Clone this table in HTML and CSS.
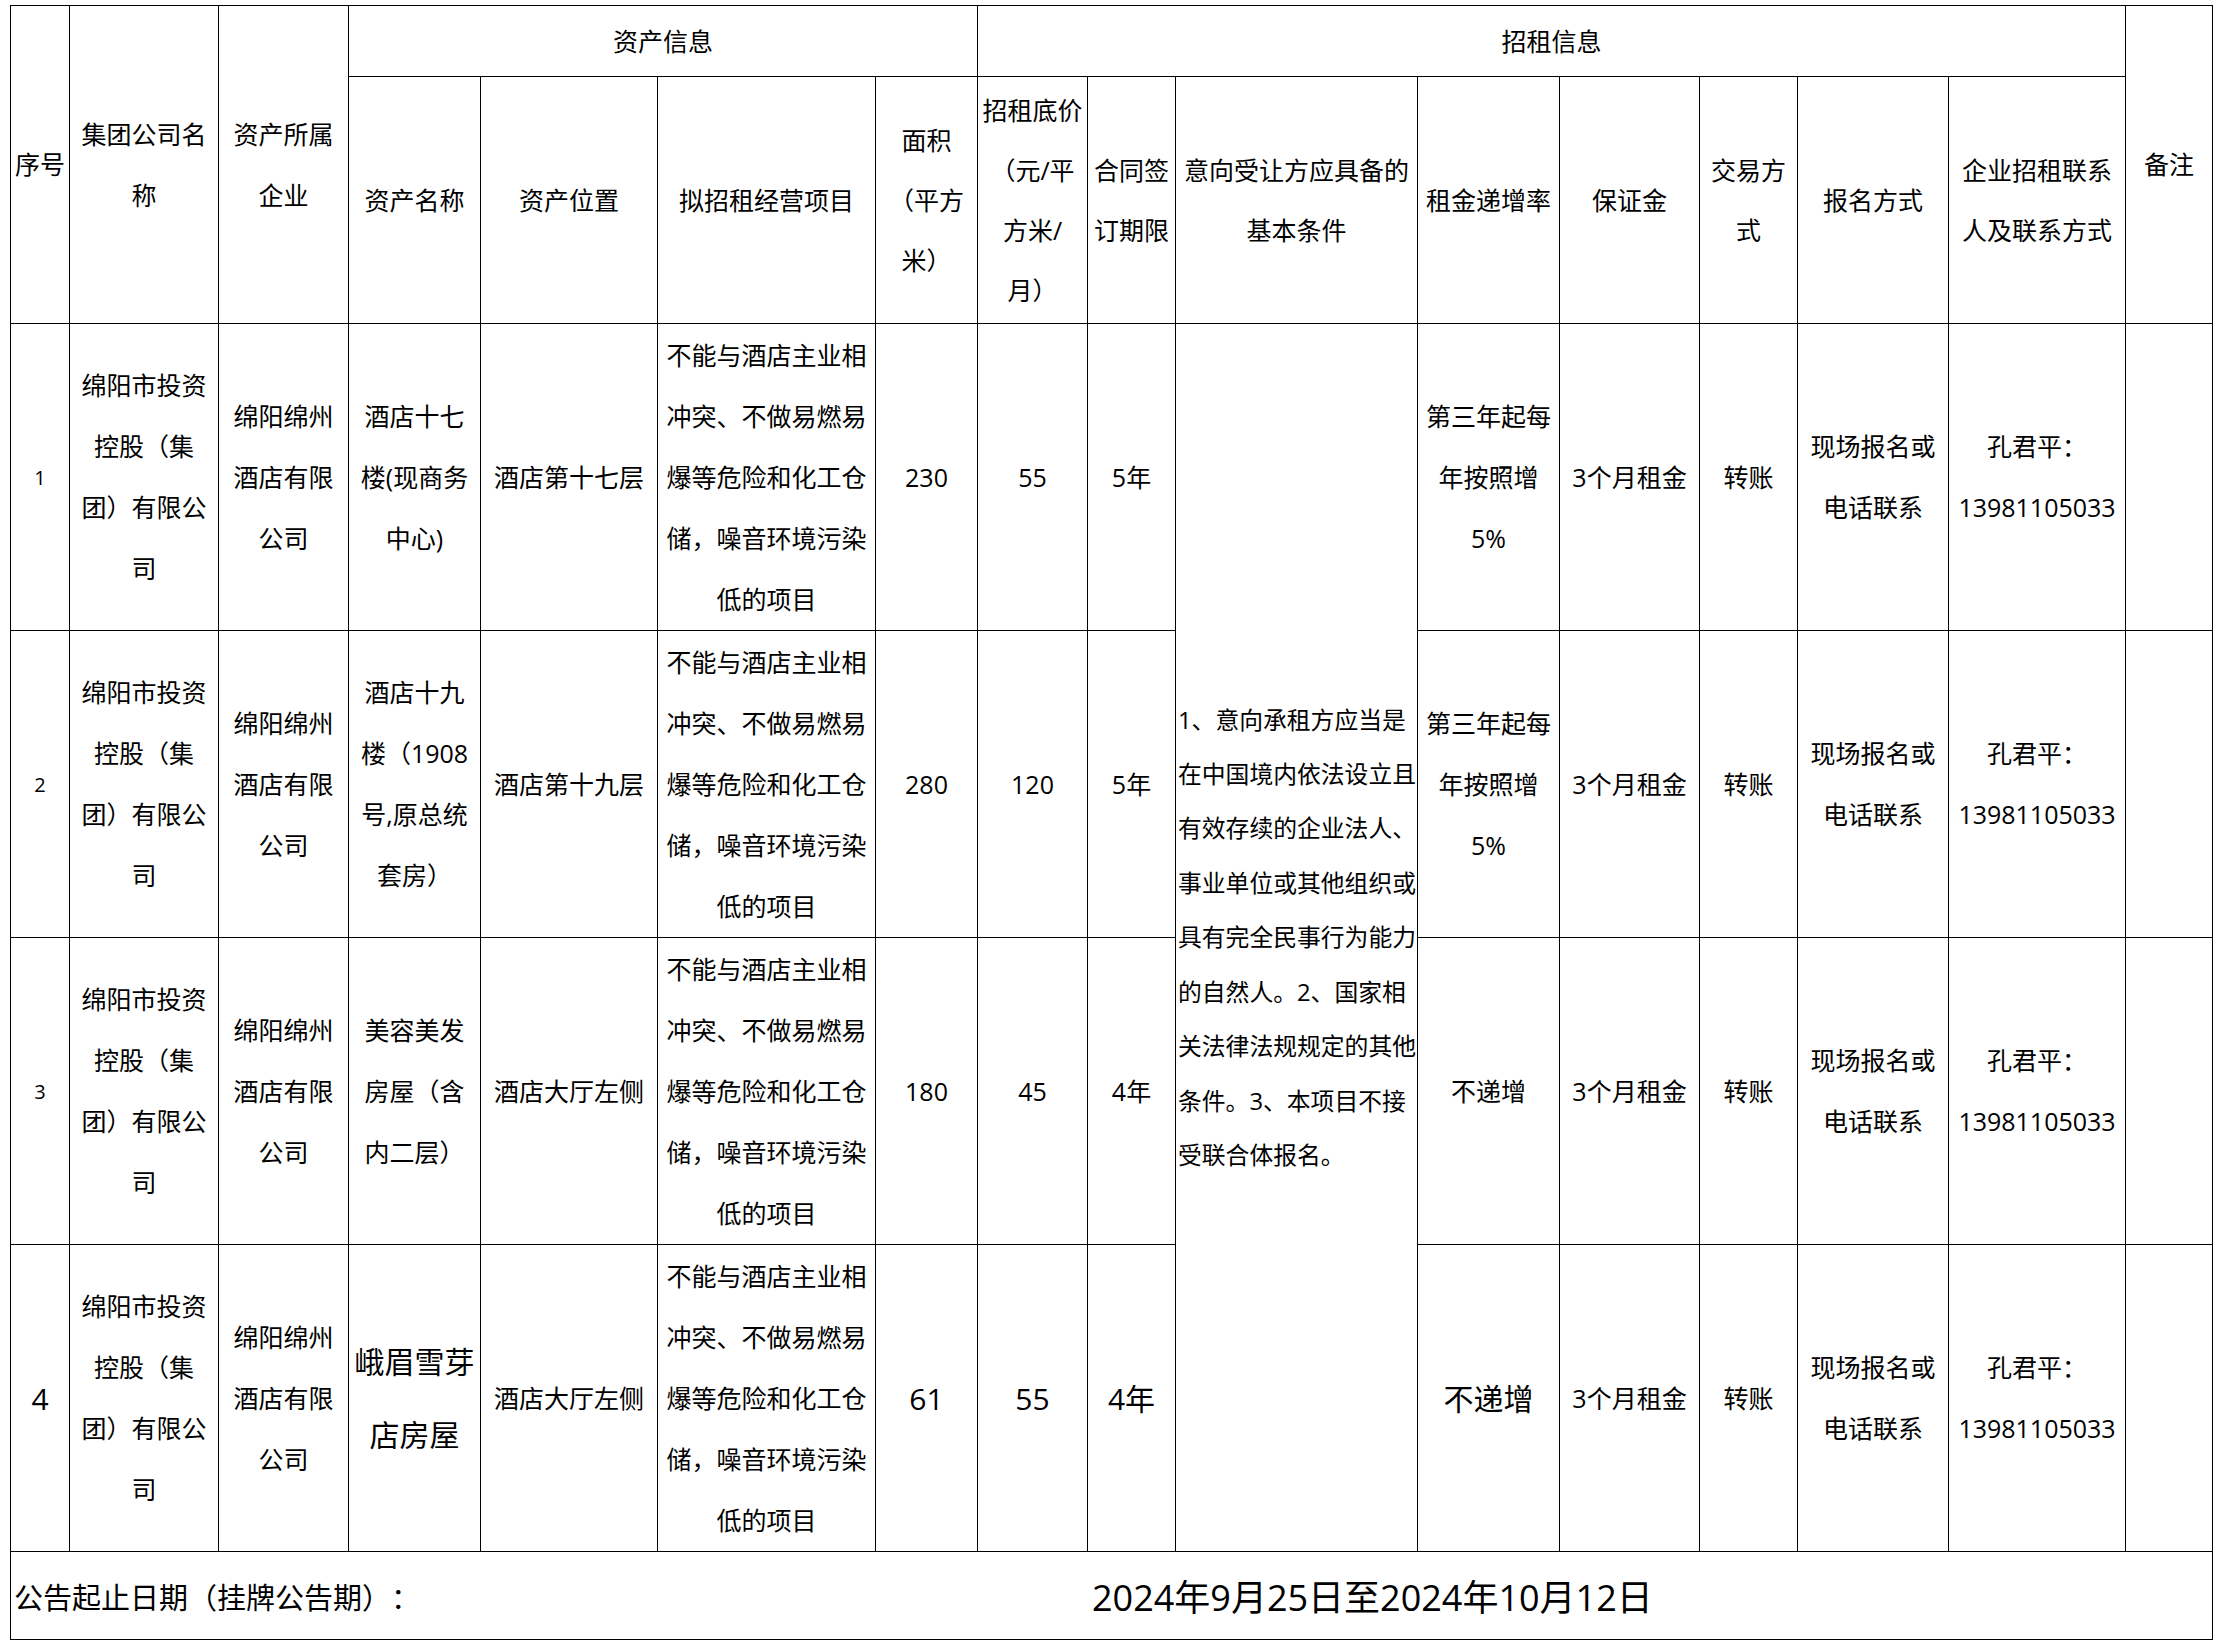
FILE: index.html
```html
<!DOCTYPE html>
<html lang="zh-CN">
<head>
<meta charset="utf-8">
<title>招租公告</title>
<link rel="stylesheet" href="styles.css">
</head>
<body>
<table class="sheet">
  <colgroup>
    <col class="c1"><col class="c2"><col class="c3"><col class="c4"><col class="c5"><col class="c6"><col class="c7"><col class="c8">
    <col class="c9"><col class="c10"><col class="c11"><col class="c12"><col class="c13"><col class="c14"><col class="c15"><col class="c16">
  </colgroup>
  <thead>
    <tr class="h1">
      <th rowspan="2">序号</th>
      <th rowspan="2">集团公司名<br>称</th>
      <th rowspan="2">资产所属<br>企业</th>
      <th colspan="4">资产信息</th>
      <th colspan="8">招租信息</th>
      <th rowspan="2">备注</th>
    </tr>
    <tr class="h2">
      <th>资产名称</th>
      <th>资产位置</th>
      <th>拟招租经营项目</th>
      <th>面积<br>（平方<br>米）</th>
      <th>招租底价<br>（元/平<br>方米/<br>月）</th>
      <th>合同签<br>订期限</th>
      <th>意向受让方应具备的<br>基本条件</th>
      <th>租金递增率</th>
      <th>保证金</th>
      <th>交易方<br>式</th>
      <th>报名方式</th>
      <th>企业招租联系<br>人及联系方式</th>
    </tr>
  </thead>
  <tbody>
    <tr class="row">
      <td class="idx">1</td>
      <td>绵阳市投资<br>控股（集<br>团）有限公<br>司</td>
      <td>绵阳绵州<br>酒店有限<br>公司</td>
      <td>酒店十七<br>楼(现商务<br>中心)</td>
      <td>酒店第十七层</td>
      <td>不能与酒店主业相<br>冲突、不做易燃易<br>爆等危险和化工仓<br>储，噪音环境污染<br>低的项目</td>
      <td>230</td>
      <td>55</td>
      <td>5年</td>
      <td rowspan="4" class="cond">1、意向承租方应当是<br>在中国境内依法设立且<br>有效存续的企业法人、<br>事业单位或其他组织或<br>具有完全民事行为能力<br>的自然人。2、国家相<br>关法律法规规定的其他<br>条件。3、本项目不接<br>受联合体报名。</td>
      <td>第三年起每<br>年按照增<br>5%</td>
      <td>3个月租金</td>
      <td>转账</td>
      <td>现场报名或<br>电话联系</td>
      <td>孔君平：<br>13981105033</td>
      <td></td>
    </tr>
    <tr class="row">
      <td class="idx">2</td>
      <td>绵阳市投资<br>控股（集<br>团）有限公<br>司</td>
      <td>绵阳绵州<br>酒店有限<br>公司</td>
      <td>酒店十九<br>楼（1908<br>号,原总统<br>套房）</td>
      <td>酒店第十九层</td>
      <td>不能与酒店主业相<br>冲突、不做易燃易<br>爆等危险和化工仓<br>储，噪音环境污染<br>低的项目</td>
      <td>280</td>
      <td>120</td>
      <td>5年</td>
      <td>第三年起每<br>年按照增<br>5%</td>
      <td>3个月租金</td>
      <td>转账</td>
      <td>现场报名或<br>电话联系</td>
      <td>孔君平：<br>13981105033</td>
      <td></td>
    </tr>
    <tr class="row">
      <td class="idx">3</td>
      <td>绵阳市投资<br>控股（集<br>团）有限公<br>司</td>
      <td>绵阳绵州<br>酒店有限<br>公司</td>
      <td>美容美发<br>房屋（含<br>内二层）</td>
      <td>酒店大厅左侧</td>
      <td>不能与酒店主业相<br>冲突、不做易燃易<br>爆等危险和化工仓<br>储，噪音环境污染<br>低的项目</td>
      <td>180</td>
      <td>45</td>
      <td>4年</td>
      <td>不递增</td>
      <td>3个月租金</td>
      <td>转账</td>
      <td>现场报名或<br>电话联系</td>
      <td>孔君平：<br>13981105033</td>
      <td></td>
    </tr>
    <tr class="row">
      <td class="big">4</td>
      <td>绵阳市投资<br>控股（集<br>团）有限公<br>司</td>
      <td>绵阳绵州<br>酒店有限<br>公司</td>
      <td class="big tall">峨眉雪芽<br>店房屋</td>
      <td>酒店大厅左侧</td>
      <td>不能与酒店主业相<br>冲突、不做易燃易<br>爆等危险和化工仓<br>储，噪音环境污染<br>低的项目</td>
      <td class="big">61</td>
      <td class="big">55</td>
      <td class="big">4年</td>
      <td class="big">不递增</td>
      <td>3个月租金</td>
      <td>转账</td>
      <td>现场报名或<br>电话联系</td>
      <td>孔君平：<br>13981105033</td>
      <td></td>
    </tr>
    <tr class="foot">
      <td colspan="16" class="foot-cell">
        <div class="foot-inner">
          <span class="foot-label">公告起止日期（挂牌公告期）：</span>
          <span class="foot-date">2024年9月25日至2024年10月12日</span>
        </div>
      </td>
    </tr>
  </tbody>
</table>
</body>
</html>
```
FILE: styles.css
```css
html, body {
  margin: 0;
  padding: 0;
  background: #fff;
}

body {
  padding: 5px 0 0 10px;
  color: #000;
  font-family: "Open Sans", "Noto Sans CJK SC", sans-serif;
  text-spacing-trim: space-all;
}

.sheet {
  border-collapse: collapse;
  table-layout: fixed;
  width: 2202px;
}

.c1 { width: 59px; }
.c2 { width: 149px; }
.c3 { width: 130px; }
.c4 { width: 132px; }
.c5 { width: 177px; }
.c6 { width: 218px; }
.c7 { width: 102px; }
.c8 { width: 110px; }
.c9 { width: 88px; }
.c10 { width: 242px; }
.c11 { width: 142px; }
.c12 { width: 140px; }
.c13 { width: 98px; }
.c14 { width: 151px; }
.c15 { width: 177px; }
.c16 { width: 87px; }

.sheet th,
.sheet td {
  border: 1.5px solid #000;
  padding: 0;
  text-align: center;
  vertical-align: middle;
  white-space: nowrap;
  font-size: 25px;
  font-weight: 400;
  line-height: 61px;
  overflow: hidden;
}

.h1 { height: 71px; }
.h2 { height: 247px; }
.h2 th { line-height: 60px; }
.row { height: 307px; }
.foot { height: 88px; }

.sheet td.idx {
  font-size: 20px;
}

.sheet td.big {
  font-size: 30px;
}

.sheet td.tall {
  line-height: 73px;
}

.sheet td.cond {
  text-align: left;
  font-size: 23.8px;
  line-height: 54.4px;
  padding-left: 2px;
}

.sheet td.foot-cell {
  text-align: left;
  line-height: normal;
}

.foot-inner {
  display: flex;
  align-items: center;
  padding-left: 3px;
}

.foot-label {
  width: 1078px;
  font-size: 29px;
}

.foot-date {
  font-size: 36px;
}
```
